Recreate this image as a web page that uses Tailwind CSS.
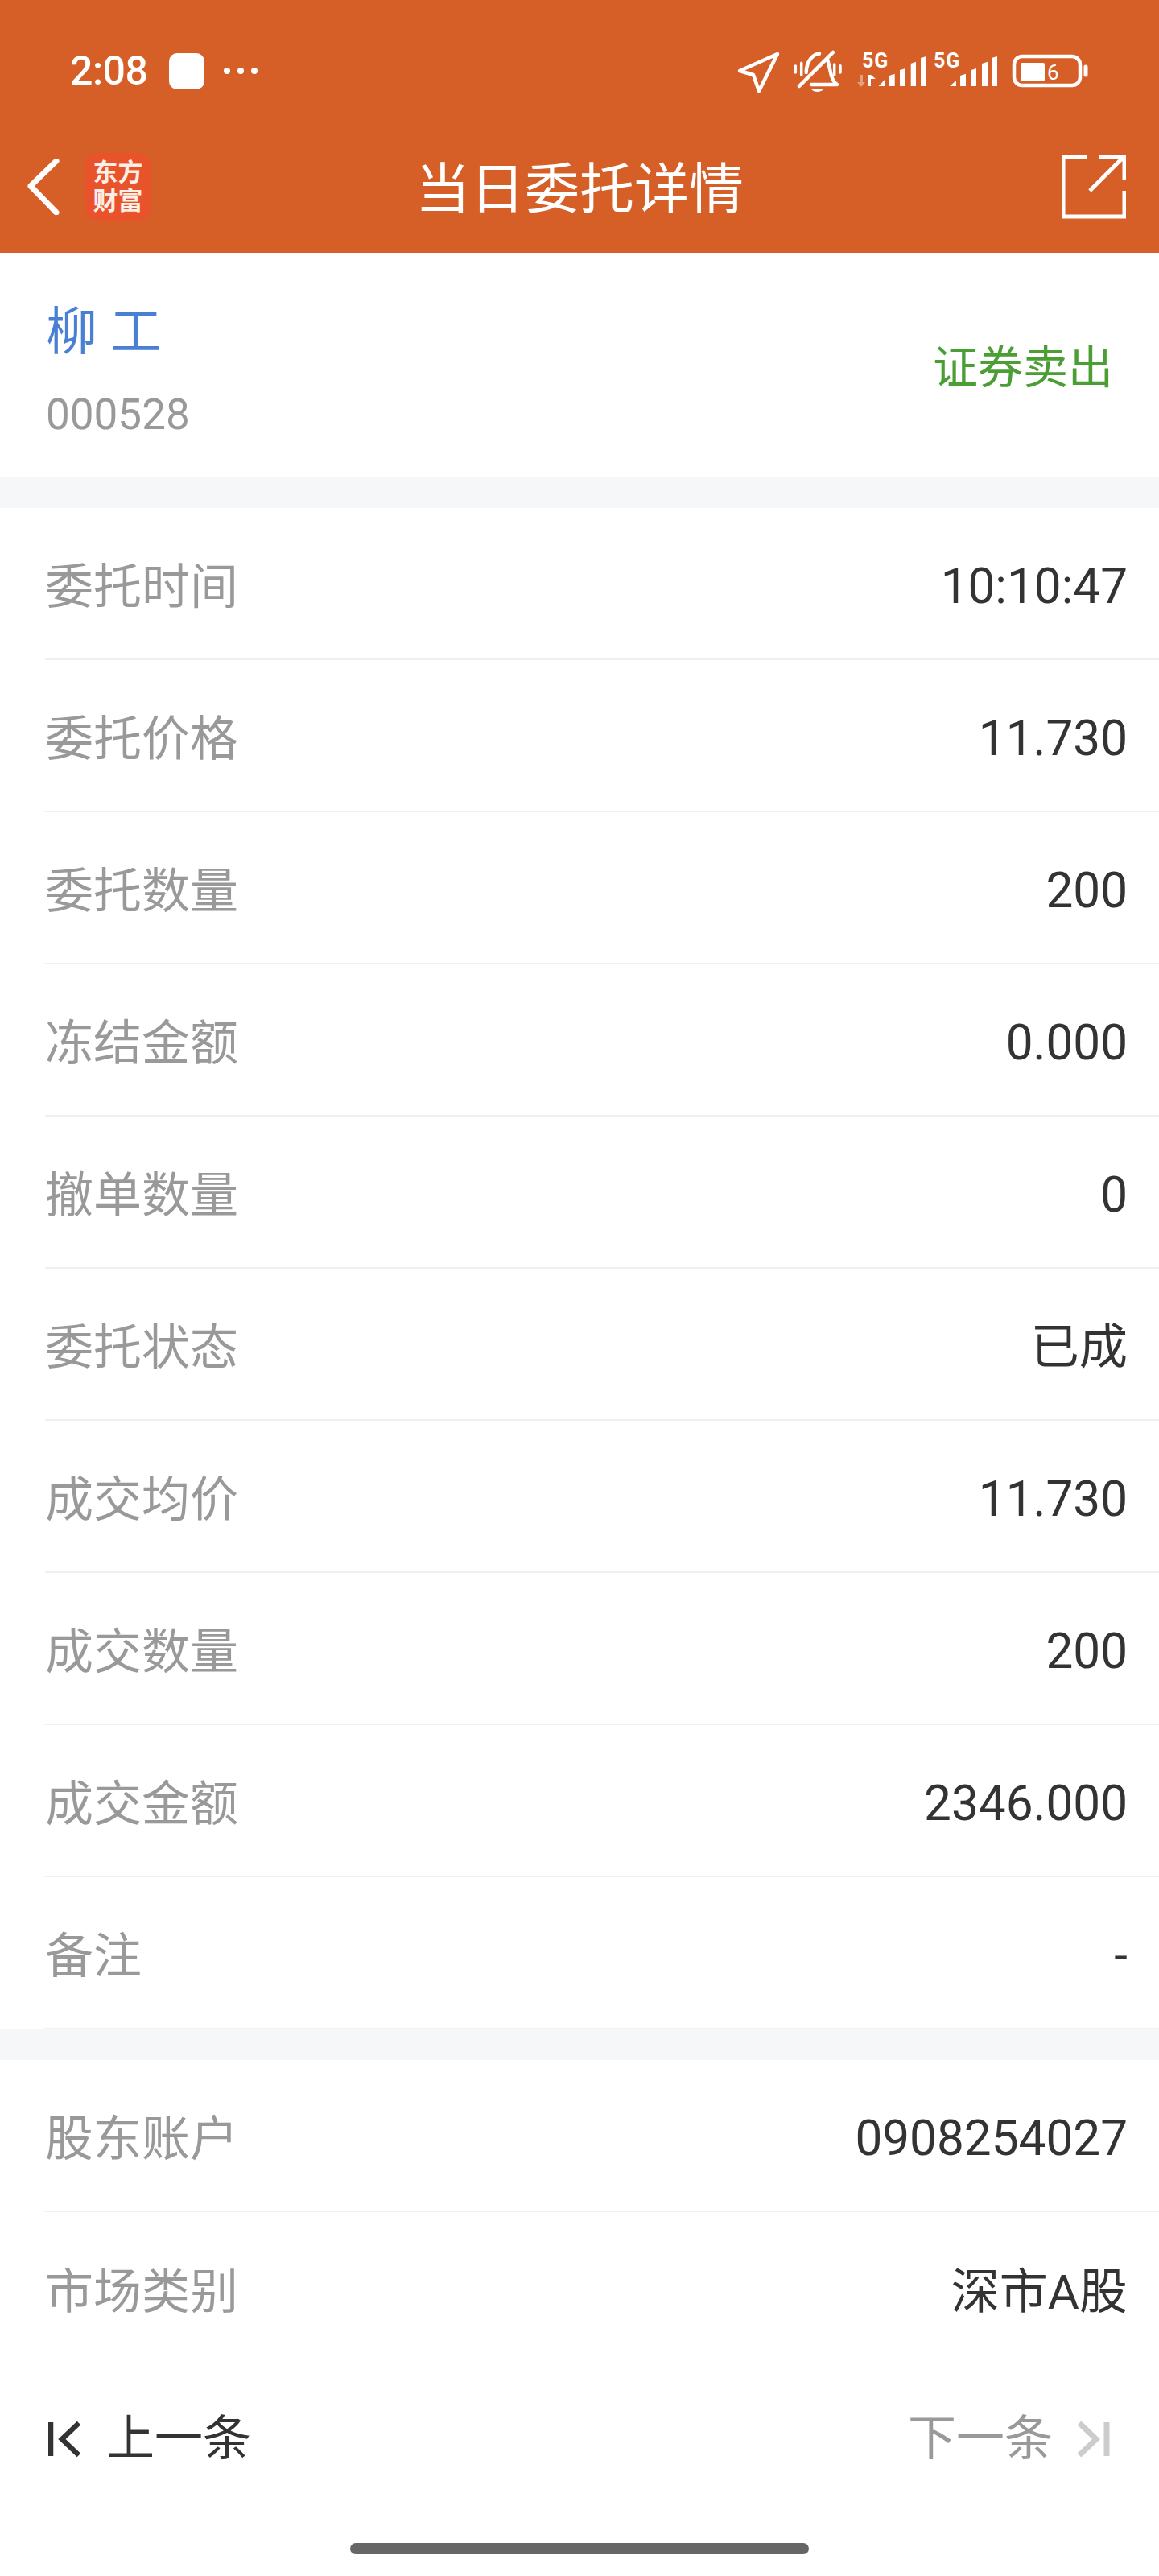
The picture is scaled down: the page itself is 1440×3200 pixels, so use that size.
<!DOCTYPE html>
<html lang="zh-CN">
  <head>
    <meta charset="UTF-8" />
    <meta name="viewport" content="width=device-width, initial-scale=1.0" />
    <title>当日委托详情</title>
    <script src="https://cdn.jsdelivr.net/npm/@tailwindcss/browser@4"></script>
  </head>
  <body class="bg-white font-['Roboto','Noto_Sans_CJK_SC',sans-serif]">
    <div class="h-[3200px] w-[1440px] overflow-hidden">
      <!-- status bar + title bar -->
      <header class="h-[314px] bg-[#d65f28] text-white">
        <div class="flex h-[150px] items-center justify-between pt-[26px] pr-[88px] pl-[87px]">
          <div class="flex items-center">
            <span class="text-[50px] leading-none font-medium tracking-[-0.5px]">2:08</span>
            <span class="ml-[27px] h-[45px] w-[44px] rounded-[10px] bg-white"></span>
            <span class="ml-[24px] flex gap-[9px]">
              <i class="size-[8px] rounded-full bg-white"></i>
              <i class="size-[8px] rounded-full bg-white"></i>
              <i class="size-[8px] rounded-full bg-white"></i>
            </span>
          </div>
          <svg class="mt-[4px] h-[60px] w-[442px]" viewBox="0 0 442 60" fill="none" stroke="white" stroke-width="4.500" stroke-linecap="round" stroke-linejoin="round">
            <path d="M56 7 9 28 26 33 33 53Z" />
            <path d="M83 47 125 5M91.700 30C92 16 100 7 108 6.700M118 14C120 20 121 26 122 30 123 36 126 42 130 45H98" />
            <path d="M78.300 22V30M85.700 18.300V33.300M126.700 20V33M134 21.700V30" stroke-width="3.500" />
            <path d="M98 50.500H113C111 55 100 55 98 50.500Z" fill="white" stroke="none" />
            <g fill="white" stroke="none" font-family="Roboto" font-weight="700" font-size="25">
              <text x="161" y="24" letter-spacing="1">5G</text>
              <text x="250" y="24" letter-spacing="1">5G</text>
              <path d="M181.700 47 190 38V47ZM195 47V34L201.700 31.700V47ZM208 47V27L215 25V47ZM221.700 47V19L228 16.700V47ZM234 47V12L240.700 10V47Z" />
              <path d="M168 33H172V47H168ZM172 33 178 38H172Z" />
              <path d="M158 33H162V42H165L160 48 155 42H158Z" opacity="0.4" />
              <path d="M270 47 278 40V47ZM283 47V34L290 31.700V47ZM297 47V27L303 25V47ZM310 47V19L317 16.700V47ZM322 47V12L329 10V47Z" />
            </g>
            <rect x="350" y="10" width="82" height="36" rx="10" />
            <rect x="358" y="18" width="30" height="23" rx="2" fill="white" stroke="none" />
            <text x="391" y="39" fill="white" stroke="none" font-family="Roboto" font-size="26">6</text>
            <path d="M439 23V33" stroke-width="5" />
          </svg>
        </div>
        <nav class="relative flex h-[164px] items-center justify-between pr-[41px] pl-[33px]">
          <div class="flex items-center">
            <svg class="h-[70px] w-[42px]" viewBox="0 0 42 70" fill="none" stroke="white" stroke-width="7" stroke-linecap="round" stroke-linejoin="round">
              <path d="M37 3 5 34 37 67" />
            </svg>
            <div class="ml-[30px] flex h-[84px] w-[83px] flex-col items-center justify-center rounded-[16px] bg-[#e8532b] text-[31px] leading-[35px] font-bold text-[#fdeee6]">
              <span>东方</span>
              <span>财富</span>
            </div>
          </div>
          <h1 class="absolute inset-x-0 mt-[8px] text-center text-[68px] leading-none font-normal">当日委托详情</h1>
          <svg class="h-[80px] w-[80px]" viewBox="0 0 80 80" fill="none" stroke="white" stroke-width="5">
            <path d="M31 3H2V77H78V45M35 45 77 3M47 3H78V31" />
          </svg>
        </nav>
      </header>

      <!-- stock name -->
      <section class="flex h-[279px] items-center justify-between pt-[16px] pr-[57px] pl-[57px]">
        <div>
          <div class="text-[64px] leading-none text-[#4a80d4]">柳 工</div>
          <div class="mt-[44px] text-[53px] leading-none text-[#999999]">000528</div>
        </div>
        <div class="mb-[9px] text-[56px] leading-none text-[#4a9e33]">证券卖出</div>
      </section>
      <div class="h-[38px] bg-[#f6f7f9]"></div>

      <!-- order fields -->
      <section class="text-[60px] leading-none">
        <div class="ml-[56px] flex h-[189px] items-center justify-between border-b-2 border-[#f0f0f0] pt-[10px] pr-[39px]"><span class="text-[#999999]">委托时间</span><span class="text-[60.250px] text-[#333333]">10:10:47</span></div>
        <div class="ml-[56px] flex h-[189px] items-center justify-between border-b-2 border-[#f0f0f0] pt-[10px] pr-[39px]"><span class="text-[#999999]">委托价格</span><span class="text-[60.250px] text-[#333333]">11.730</span></div>
        <div class="ml-[56px] flex h-[189px] items-center justify-between border-b-2 border-[#f0f0f0] pt-[10px] pr-[39px]"><span class="text-[#999999]">委托数量</span><span class="text-[60.250px] text-[#333333]">200</span></div>
        <div class="ml-[56px] flex h-[189px] items-center justify-between border-b-2 border-[#f0f0f0] pt-[10px] pr-[39px]"><span class="text-[#999999]">冻结金额</span><span class="text-[60.250px] text-[#333333]">0.000</span></div>
        <div class="ml-[56px] flex h-[189px] items-center justify-between border-b-2 border-[#f0f0f0] pt-[10px] pr-[39px]"><span class="text-[#999999]">撤单数量</span><span class="text-[60.250px] text-[#333333]">0</span></div>
        <div class="ml-[56px] flex h-[189px] items-center justify-between border-b-2 border-[#f0f0f0] pt-[10px] pr-[39px]"><span class="text-[#999999]">委托状态</span><span class="text-[60.250px] text-[#333333]">已成</span></div>
        <div class="ml-[56px] flex h-[189px] items-center justify-between border-b-2 border-[#f0f0f0] pt-[10px] pr-[39px]"><span class="text-[#999999]">成交均价</span><span class="text-[60.250px] text-[#333333]">11.730</span></div>
        <div class="ml-[56px] flex h-[189px] items-center justify-between border-b-2 border-[#f0f0f0] pt-[10px] pr-[39px]"><span class="text-[#999999]">成交数量</span><span class="text-[60.250px] text-[#333333]">200</span></div>
        <div class="ml-[56px] flex h-[189px] items-center justify-between border-b-2 border-[#f0f0f0] pt-[10px] pr-[39px]"><span class="text-[#999999]">成交金额</span><span class="text-[60.250px] text-[#333333]">2346.000</span></div>
        <div class="ml-[56px] flex h-[189px] items-center justify-between border-b-2 border-[#f0f0f0] pt-[10px] pr-[39px]"><span class="text-[#999999]">备注</span><span class="text-[60.250px] text-[#333333]">-</span></div>
      </section>
      <div class="h-[38px] bg-[#f6f7f9]"></div>

      <!-- account -->
      <section class="text-[60px] leading-none">
        <div class="ml-[56px] flex h-[189px] items-center justify-between border-b-2 border-[#f0f0f0] pt-[10px] pr-[39px]"><span class="text-[#999999]">股东账户</span><span class="text-[60.250px] text-[#333333]">0908254027</span></div>
        <div class="ml-[56px] flex h-[189px] items-center justify-between pt-[10px] pr-[39px]"><span class="text-[#999999]">市场类别</span><span class="text-[#333333]">深市A股</span></div>
      </section>

      <!-- previous / next -->
      <footer class="flex h-[186px] items-center justify-between pr-[60px] pl-[60px] text-[60px] leading-none">
        <div class="flex items-center text-[#333333]">
          <svg class="h-[46px] w-[42px]" viewBox="0 0 42 46" fill="none" stroke="#333333" stroke-width="6.500">
            <path d="M3 2V44M38 3 17 23 38 43" />
          </svg>
          <span class="ml-[30px]">上一条</span>
        </div>
        <div class="flex items-center text-[#999999]">
          <span>下一条</span>
          <svg class="ml-[30px] h-[46px] w-[42px]" viewBox="0 0 42 46" fill="none" stroke="#cccccc" stroke-width="7">
            <path d="M3 3 24 23 3 43M37 2V44" />
          </svg>
        </div>
      </footer>
      <div class="mx-auto mt-[36px] h-[14px] w-[570px] rounded-full bg-[#666666]"></div>
    </div>
  </body>
</html>
